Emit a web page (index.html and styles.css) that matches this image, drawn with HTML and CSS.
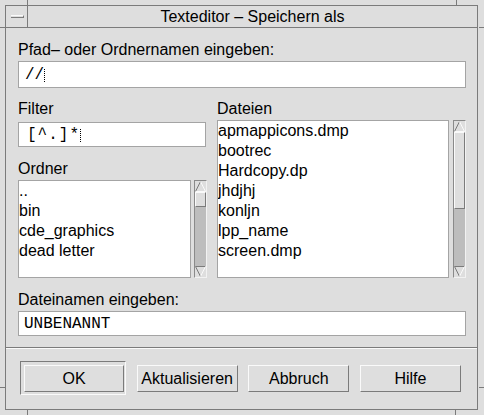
FILE: index.html
```html
<!DOCTYPE html>
<html lang="de">
<head>
<meta charset="utf-8">
<title>Texteditor – Speichern als</title>
<link rel="stylesheet" href="styles.css">
</head>
<body>
<div class="window">
  <div class="titlebar">
    <div class="menubtn"><span class="dash"></span></div>
    <div class="title">Texteditor – Speichern als</div>
  </div>
  <div class="client">
    <div class="main">
      <div class="label l-path">Pfad– oder Ordnernamen eingeben:</div>
      <div class="field f-path">//<span class="caret"></span></div>
      <div class="cols">
        <div class="col">
          <div class="label l-top">Filter</div>
          <div class="field f-filter">[^.]*<span class="caret"></span></div>
          <div class="label l-ordner">Ordner</div>
          <div class="listrow r-ordner">
            <div class="list">
              <div>..</div>
              <div>bin</div>
              <div>cde_graphics</div>
              <div>dead letter</div>
            </div>
            <div class="sb">
              <div class="arrow"><svg width="11" height="11" viewBox="0 0 11 11"><polygon points="5.5,0.5 10.5,10.5 0.5,10.5" fill="#dedede"/><line x1="5.5" y1="0.5" x2="0.5" y2="10.5" stroke="#7b7b7b"/><line x1="5.5" y1="0.5" x2="10.5" y2="10.5" stroke="#fafafa"/><line x1="0.5" y1="10.5" x2="10.5" y2="10.5" stroke="#fafafa"/></svg></div>
              <div class="thumb t-ordner"></div>
              <div class="trough"></div>
              <div class="arrow"><svg width="11" height="11" viewBox="0 0 11 11"><polygon points="0.5,0.5 10.5,0.5 5.5,10.5" fill="#dedede"/><line x1="0.5" y1="0.5" x2="10.5" y2="0.5" stroke="#7b7b7b"/><line x1="0.5" y1="0.5" x2="5.5" y2="10.5" stroke="#7b7b7b"/><line x1="10.5" y1="0.5" x2="5.5" y2="10.5" stroke="#fafafa"/></svg></div>
            </div>
          </div>
        </div>
        <div class="col">
          <div class="label l-top">Dateien</div>
          <div class="listrow r-dateien">
            <div class="list">
              <div>apmappicons.dmp</div>
              <div>bootrec</div>
              <div>Hardcopy.dp</div>
              <div>jhdjhj</div>
              <div>konljn</div>
              <div>lpp_name</div>
              <div>screen.dmp</div>
            </div>
            <div class="sb">
              <div class="arrow"><svg width="11" height="11" viewBox="0 0 11 11"><polygon points="5.5,0.5 10.5,10.5 0.5,10.5" fill="#dedede"/><line x1="5.5" y1="0.5" x2="0.5" y2="10.5" stroke="#7b7b7b"/><line x1="5.5" y1="0.5" x2="10.5" y2="10.5" stroke="#fafafa"/><line x1="0.5" y1="10.5" x2="10.5" y2="10.5" stroke="#fafafa"/></svg></div>
              <div class="thumb t-dateien"></div>
              <div class="trough"></div>
              <div class="arrow"><svg width="11" height="11" viewBox="0 0 11 11"><polygon points="0.5,0.5 10.5,0.5 5.5,10.5" fill="#dedede"/><line x1="0.5" y1="0.5" x2="10.5" y2="0.5" stroke="#7b7b7b"/><line x1="0.5" y1="0.5" x2="5.5" y2="10.5" stroke="#7b7b7b"/><line x1="10.5" y1="0.5" x2="5.5" y2="10.5" stroke="#fafafa"/></svg></div>
            </div>
          </div>
        </div>
      </div>
      <div class="label l-name">Dateinamen eingeben:</div>
      <div class="field f-name">UNBENANNT</div>
    </div>
    <div class="sep"></div>
    <div class="btnrow">
      <div class="default"><div class="btn">OK</div></div>
      <div class="btn">Aktualisieren</div>
      <div class="btn">Abbruch</div>
      <div class="btn">Hilfe</div>
    </div>
  </div>
</div>
<span class="tick tv t1"></span>
<span class="tick tv t2"></span>
<span class="tick tv t3"></span>
<span class="tick tv t4"></span>
<span class="tick th t5"></span>
<span class="tick th t6"></span>
<span class="tick th t7"></span>
<span class="tick th t8"></span>
</body>
</html>
```
FILE: styles.css
```css
* { box-sizing: border-box; }
html, body { margin: 0; padding: 0; }
body {
  background: #dedede;
  font-family: "Liberation Sans", Arial, sans-serif;
  font-size: 16px;
  color: #000;
  width: 484px;
  height: 415px;
  overflow: hidden;
  position: relative;
}
.window {
  height: 415px;
  padding: 5px 6px 5px 5px;
  display: flex;
  flex-direction: column;
}
.titlebar {
  height: 23px;
  border: 1px solid #7b7b7b;
  display: flex;
  flex: none;
}
.menubtn {
  width: 22px;
  border-right: 1px solid #7b7b7b;
  display: flex;
  align-items: center;
  justify-content: center;
}
.dash {
  display: block;
  width: 13px;
  height: 3px;
  border-top: 1px solid #fafafa;
  border-bottom: 1px solid #7b7b7b;
  border-right: 1px solid #7b7b7b;
  margin-left: 1px;
}
.title {
  flex: 1;
  text-align: center;
  line-height: 21px;
}
.client {
  flex: 1;
  border: 1px solid #7b7b7b;
  border-top: none;
  display: flex;
  flex-direction: column;
}
.main {
  padding: 0 11px 0 12px;
}
.label {
  height: 18px;
  line-height: 18px;
  white-space: nowrap;
}
.l-path { margin-top: 13px; }
.l-top { margin-top: 12px; }
.l-ordner { margin-top: 13px; }
.l-name { margin-top: 13px; }
.field {
  background: #fff;
  border: 1px solid #a4a4a4;
  font-family: "Liberation Mono", "Courier New", monospace;
  font-size: 16px;
  display: flex;
  align-items: center;
  padding-left: 6px;
  white-space: pre;
}
.f-path { margin-top: 2px; height: 27px; }
.f-filter { margin-top: 4px; height: 25px; width: 188px; padding-left: 8px; letter-spacing: 1px; }
.f-name { margin-top: 2px; height: 25px; padding-left: 5px; }
.caret {
  display: inline-block;
  width: 3px;
  height: 13px;
  border-left: 1px dotted #000;
  border-right: 1px dotted transparent;
  position: relative;
  top: 1px;
}
.cols {
  display: grid;
  grid-template-columns: 189px 249px;
  column-gap: 10px;
}
.col { display: flex; flex-direction: column; }
.listrow {
  display: flex;
  margin-top: 2px;
}
.r-ordner { height: 98px; gap: 3px; }
.r-dateien { height: 158px; gap: 4px; }
.list {
  flex: 1;
  background: #fff;
  border: 1px solid #a4a4a4;
  line-height: 20px;
  padding-left: 0;
  white-space: nowrap;
  overflow: hidden;
}
.sb {
  width: 13px;
  flex: none;
  background: #bdbdbd;
  border: 1px solid;
  border-color: #8a8a8a #f2f2f2 #f2f2f2 #8a8a8a;
  display: flex;
  flex-direction: column;
}
.arrow {
  height: 11px;
  flex: none;
  background: #dedede;
}
.arrow svg { display: block; }
.thumb {
  flex: none;
  background: #dedede;
  border: 1px solid;
  border-color: #fafafa #7b7b7b #7b7b7b #fafafa;
}
.t-ordner { height: 15px; }
.t-dateien { height: 77px; }
.trough { flex: 1; }
.sep {
  margin-top: 11px;
  height: 2px;
  border-top: 1px solid #7b7b7b;
  border-bottom: 1px solid #fafafa;
}
.btnrow {
  display: flex;
  justify-content: space-between;
  align-items: flex-start;
  padding: 12px 16px 0 14px;
}
.default {
  width: 106px;
  border: 1px solid;
  border-color: #7b7b7b #fafafa #fafafa #7b7b7b;
  padding: 3px 1px 2px 3px;
}
.btn {
  width: 101px;
  height: 27px;
  border: 1px solid;
  border-color: #fafafa #7b7b7b #7b7b7b #fafafa;
  display: flex;
  align-items: center;
  justify-content: center;
  margin-top: 4px;
  white-space: nowrap;
}
.default .btn { width: 100px; margin-top: 0; }
.tick { position: absolute; background: #7b7b7b; }
.tv { width: 1px; height: 5px; }
.th { width: 5px; height: 1px; }
.t1 { left: 27px; top: 0; }
.t2 { left: 456px; top: 0; }
.t3 { left: 27px; top: 410px; }
.t4 { left: 455px; top: 410px; }
.t5 { left: 0; top: 27px; }
.t6 { left: 479px; top: 27px; }
.t7 { left: 0; top: 387px; }
.t8 { left: 479px; top: 387px; }
```
